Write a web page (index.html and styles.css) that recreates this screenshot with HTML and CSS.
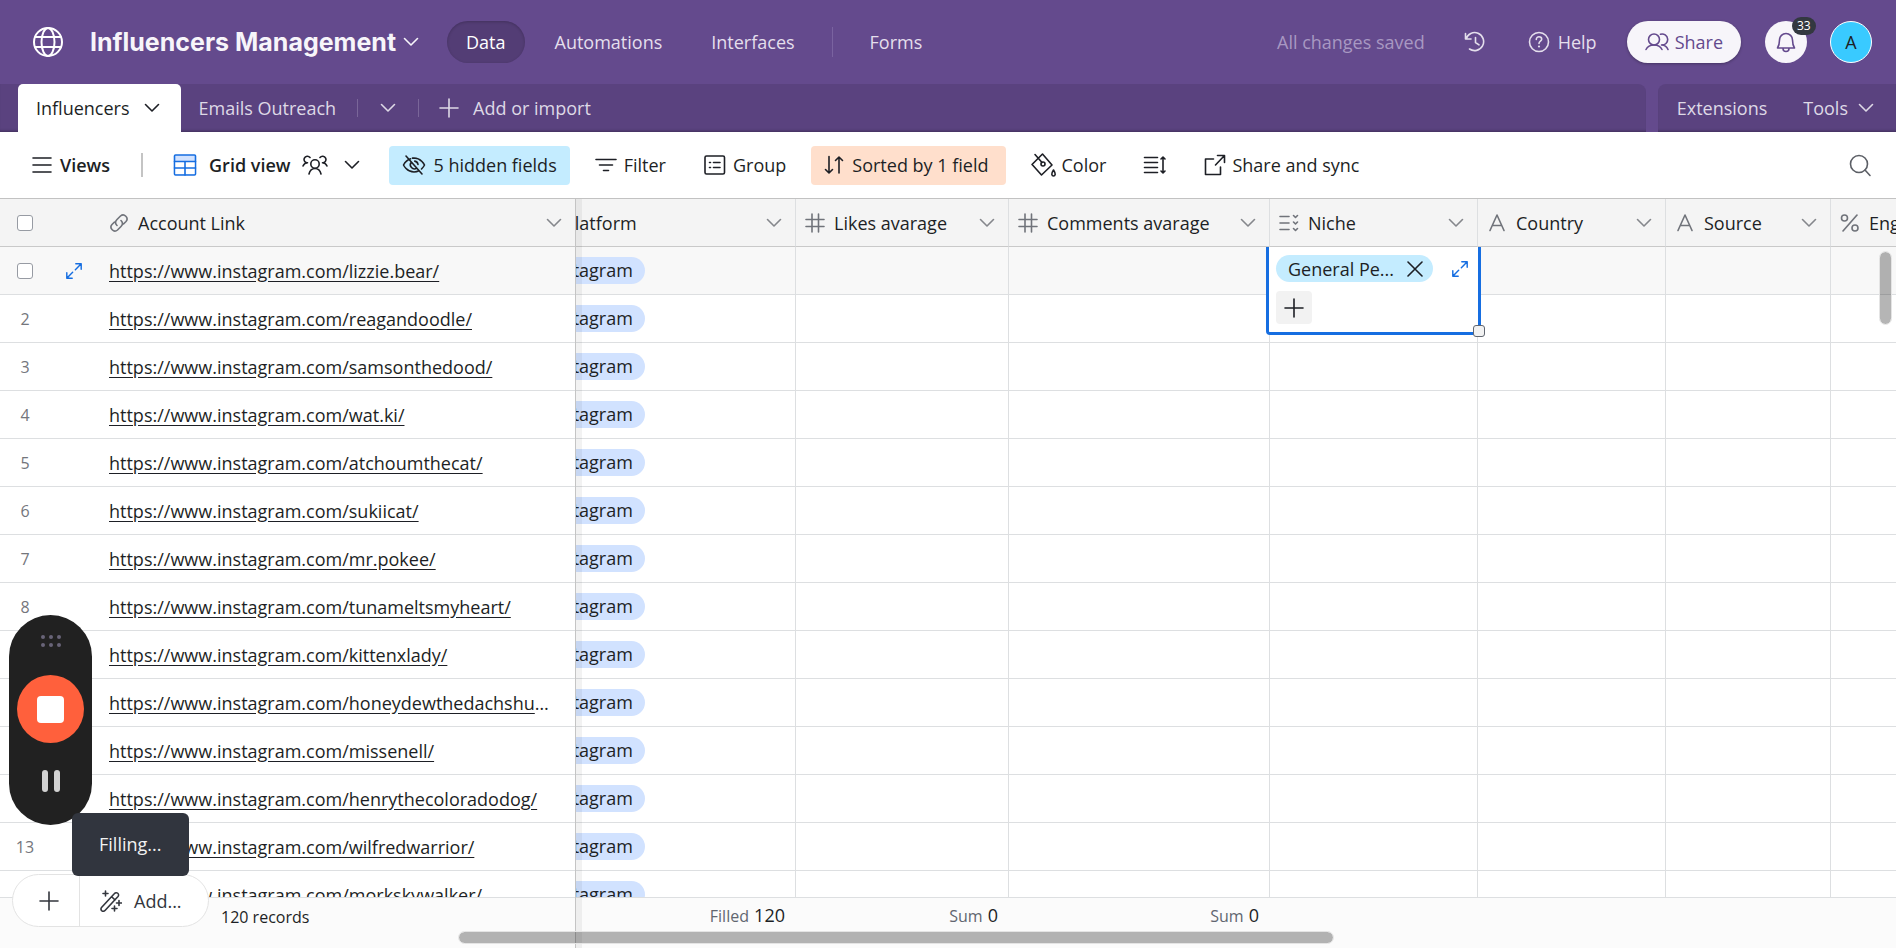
FILE: index.html
```html
<!DOCTYPE html>
<html lang="en">
<head>
<meta charset="utf-8">
<title>Influencers Management</title>
<link rel="stylesheet" href="styles.css">
</head>
<body>
<svg class="defs" aria-hidden="true">
  <symbol id="i-chev" viewBox="0 0 16 10"><path d="M1.500 1.500 8 8l6.500-6.500"/></symbol>
  <symbol id="i-plus" viewBox="0 0 20 20"><path d="M10 1v18M1 10h18"/></symbol>
  <symbol id="i-hash" viewBox="0 0 20 20"><path d="M7 1v18M13.500 1v18M1 6.500h18M1 13.500h18"/></symbol>
  <symbol id="i-text" viewBox="0 0 20 20"><path d="M3 17.500 10 2l7 15.500M5.500 12.500h9"/></symbol>
  <symbol id="i-expand" viewBox="0 0 20 20"><path d="M12 2h6v6M18 2l-6.500 6.500M8 18H2v-6M2 18l6.500-6.500"/></symbol>
</svg>

<header class="topbar">
  <a class="home" href="#" aria-label="Home"><svg class="icon s32" viewBox="0 0 32 32"><circle cx="16" cy="16" r="14"/><ellipse cx="16" cy="16" rx="6.500" ry="14"/><path d="M3.500 11h25M3.500 21h25"/></svg></a>
  <button class="base-name"><span>Influencers Management</span><svg class="icon chev"><use href="#i-chev"/></svg></button>
  <nav class="modes">
    <a class="mode on" href="#">Data</a>
    <a class="mode" href="#">Automations</a>
    <a class="mode" href="#">Interfaces</a>
    <span class="mode-split"></span>
    <a class="mode" href="#">Forms</a>
  </nav>
  <div class="account">
    <span class="saved">All changes saved</span>
    <button class="history" aria-label="History"><svg class="icon s22" viewBox="0 0 22 22"><path d="M1.500 2.500v5.500H7M2 8A9 9 0 1 1 5.500 18M11.500 6.500v5l3.500 2.300"/></svg></button>
    <button class="help"><svg class="icon s22" viewBox="0 0 22 22"><circle cx="11" cy="11" r="9.500"/><path d="M8.300 8.500c0-1.600 1.200-2.700 2.700-2.700s2.700 1 2.700 2.500c0 1.900-2.700 2-2.700 4.200"/><circle class="dot" cx="11" cy="15.500" r="1.100"/></svg>Help</button>
    <button class="share"><svg class="icon s24" viewBox="0 0 24 24"><circle cx="9" cy="9.500" r="5.500"/><path d="M1 19.500C2.500 16.500 5.500 15 9 15s6.500 1.500 8 4.500M15.500 4.300A5.500 5.500 0 1 1 16.500 15c3 0 5.300 1.700 6.500 4.500"/></svg>Share</button>
    <button class="bell" aria-label="Notifications"><svg class="icon s24" viewBox="0 0 24 24"><path d="M5.500 10a6.500 6.500 0 0 1 13 0c0 4 1 6.300 2 8h-17c1-1.700 2-4 2-8zM9 18.500c0 4 6 4 6 0"/></svg><span class="badge">33</span></button>
    <button class="avatar">A</button>
  </div>
</header>

<div class="tabbar">
  <div class="tables">
    <button class="tab on">Influencers<svg class="icon chev"><use href="#i-chev"/></svg></button>
    <button class="tab">Emails Outreach</button>
    <span class="tab-split"></span>
    <button class="tab-more" aria-label="All tables"><svg class="icon chev"><use href="#i-chev"/></svg></button>
    <span class="tab-split"></span>
    <button class="tab-add"><svg class="icon s20"><use href="#i-plus"/></svg>Add or import</button>
  </div>
  <div class="tools">
    <button>Extensions</button>
    <button class="tools-menu">Tools<svg class="icon chev"><use href="#i-chev"/></svg></button>
  </div>
</div>

<div class="toolbar">
  <button class="tool views"><svg class="icon s20" viewBox="0 0 20 20"><path d="M1 3h18M1 10h18M1 17h18"/></svg>Views</button>
  <span class="tool-split"></span>
  <button class="tool view-name"><svg class="icon s24 blue" viewBox="0 0 24 24"><rect class="tint" x="1.500" y="2" width="21" height="20" rx="1"/><path class="sheet" d="M2.500 9h19v12h-19z"/><path d="M1.500 8.500h21M1.500 15h21M12 8.500V22"/></svg>Grid view<svg class="icon people" viewBox="0 0 26 22"><circle cx="13" cy="10" r="4.200"/><path d="M7 20c.8-3.500 3-5.500 6-5.500s5.200 2 6 5.500M1 12c.8-1.800 2.200-3 4.500-3.200M8 3.500A3.300 3.300 0 1 0 5.500 8.800M25 12c-.8-1.800-2.200-3-4.500-3.200M18 3.500a3.300 3.300 0 1 1 2.500 5.300"/></svg><svg class="icon chev"><use href="#i-chev"/></svg></button>
  <button class="tool hidden-fields"><svg class="icon s24" viewBox="0 0 24 24"><path d="M4 3l16 18M8.500 5.700C4 7.200 1.500 12 1.500 12s3.300 7 10.500 7c2 0 3.600-.5 5-1.200M10.500 5.100 12 5c7.200 0 10.500 7 10.500 7s-1 2-3 4M9.300 9.300a4 4 0 0 0 5.400 5.800M12.800 8.100A4 4 0 0 1 16 11.500"/></svg>5 hidden fields</button>
  <button class="tool"><svg class="icon s24" viewBox="0 0 24 24"><path d="M2 6.500h20M5.500 12h13M9.500 17.500h5"/></svg>Filter</button>
  <button class="tool"><svg class="icon s24" viewBox="0 0 24 24"><rect x="2" y="3" width="19.500" height="18" rx="1.500"/><path d="M6.500 9.500h1M10.500 9.500H17M6.500 14.500h1M10.500 14.500H17"/></svg>Group</button>
  <button class="tool sorted"><svg class="icon s20" viewBox="0 0 20 20"><path d="M5 1.500v16M1.500 14.500 5 18l3.500-3.500M15 18V2M11.500 5.500 15 2l3.500 3.500"/></svg>Sorted by 1 field</button>
  <button class="tool"><svg class="icon s26" viewBox="0 0 26 26"><path d="M12.500 2 2 12.500l1 1L11.500 23 22 13zM5 2.500l7 8"/><circle cx="13" cy="12" r="2"/><path d="M23.500 18c2.800 4.300 1.500 6 0 6s-2.800-1.700 0-6z"/></svg>Color</button>
  <button class="tool" aria-label="Row height"><svg class="icon s24" viewBox="0 0 24 24"><path d="M1.500 4.500h13M1.500 9.500h13M1.500 14.500h13M1.500 19.500h13M20 4.500v15M18 6l2-2 2 2M18 18l2 2 2-2"/></svg></button>
  <button class="tool"><svg class="icon s22" viewBox="0 0 22 22"><path d="M9.500 5H1.500v15.500h15v-7.500M13.500 1.500h7v7M20 2l-8.500 9"/></svg>Share and sync</button>
  <button class="search" aria-label="Search"><svg class="icon s24" viewBox="0 0 24 24"><circle cx="11" cy="11" r="8.500"/><path d="M17 17l5 5.500"/></svg></button>
</div>

<main class="grid">
  <section class="frozen">
    <div class="rows">
      <table>
        <thead><tr>
          <th class="num"><input type="checkbox" aria-label="Select all"></th>
          <th class="exp"></th>
          <th><div class="head"><svg class="icon s20" viewBox="0 0 20 20"><path d="M8 12.500c-2-2-2-4 0-6l3.500-3.500a3.900 3.900 0 0 1 5.500 5.500L14.500 11M12 7.500c2 2 2 4 0 6L8.500 17A3.900 3.900 0 0 1 3 11.500L5.500 9"/></svg>Account Link<svg class="icon chev"><use href="#i-chev"/></svg></div></th>
        </tr></thead>
        <tbody id="links"></tbody>
      </table>
    </div>
    <footer class="summary"><span class="count">120 records</span></footer>
  </section>

  <section class="scrolled">
    <div class="rows">
      <table class="fields">
        <colgroup><col class="c-platform"><col class="c-likes"><col class="c-comments"><col class="c-niche"><col class="c-country"><col class="c-source"><col class="c-eng"></colgroup>
        <thead><tr>
          <th><div class="head"><svg class="icon s20" viewBox="0 0 20 20"><circle cx="10" cy="10" r="8"/><path d="M6 8.500l4 4 4-4"/></svg>Platform<svg class="icon chev"><use href="#i-chev"/></svg></div></th>
          <th><div class="head"><svg class="icon s20"><use href="#i-hash"/></svg>Likes avarage<svg class="icon chev"><use href="#i-chev"/></svg></div></th>
          <th><div class="head"><svg class="icon s20"><use href="#i-hash"/></svg>Comments avarage<svg class="icon chev"><use href="#i-chev"/></svg></div></th>
          <th><div class="head"><svg class="icon s20" viewBox="0 0 20 20"><path d="M1 3.500h9M1 10h9M1 16.500h9M14.500 2.500l2 2 2-2M14.500 9l2 2 2-2M14.500 15.500l2 2 2-2"/></svg>Niche<svg class="icon chev"><use href="#i-chev"/></svg></div></th>
          <th><div class="head"><svg class="icon s20"><use href="#i-text"/></svg>Country<svg class="icon chev"><use href="#i-chev"/></svg></div></th>
          <th><div class="head"><svg class="icon s20"><use href="#i-text"/></svg>Source<svg class="icon chev"><use href="#i-chev"/></svg></div></th>
          <th><div class="head"><svg class="icon s20" viewBox="0 0 20 20"><circle cx="4.500" cy="5" r="3"/><circle cx="15" cy="15" r="3"/><path d="M17 2 3 18"/></svg>Engagement</div></th>
        </tr></thead>
        <tbody id="values"></tbody>
      </table>
    </div>
    <footer class="summary sums">
      <span class="sum c-platform">Filled <b>120</b></span>
      <span class="sum c-likes">Sum <b>0</b></span>
      <span class="sum c-comments">Sum <b>0</b></span>
    </footer>
  </section>
  <div class="vbar"></div>
  <div class="hbar"></div>
</main>

<div class="add-record">
  <button aria-label="Add record"><svg class="icon s20"><use href="#i-plus"/></svg></button>
  <button class="add-menu"><svg class="icon s22" viewBox="0 0 22 22"><path d="M1.500 17.500 14.500 3.500a2 2 0 0 1 3.500 3L5 20.500a2.200 2.200 0 0 1-3.500-3zM11.500 6.500l3.500 3.500M5.500 1v5M3 3.500h5M19 10.500v5M16.500 13h5M14.500 16v5M12 18.500h5"/></svg>Add...</button>
</div>

<aside class="recorder">
  <svg class="grip" viewBox="0 0 20 12"><circle cx="2" cy="2" r="2"/><circle cx="10" cy="2" r="2"/><circle cx="18" cy="2" r="2"/><circle cx="2" cy="10" r="2"/><circle cx="10" cy="10" r="2"/><circle cx="18" cy="10" r="2"/></svg>
  <button class="stop" aria-label="Stop"></button>
  <button class="pause" aria-label="Pause"></button>
</aside>
<div class="toast" role="status">Filling...</div>
<script src="grid.js"></script>
</body>
</html>
```
FILE: styles.css
```css
* { box-sizing: border-box; }
body {
  margin: 0;
  height: 100vh;
  display: flex;
  flex-direction: column;
  overflow: hidden;
  font: 18px/24px "Open Sans", "Noto Sans", sans-serif;
  color: #1d1f25;
  background: #fff;
}
button {
  display: flex;
  align-items: center;
  padding: 0;
  border: 0;
  background: none;
  color: inherit;
  font: inherit;
  white-space: nowrap;
}
a { color: inherit; text-decoration: none; }
.defs { display: none; }
.icon { flex: none; fill: none; stroke: currentColor; stroke-width: 1.6; stroke-linecap: round; stroke-linejoin: round; }
.chev { width: 16px; height: 10px; }
.s20 { width: 20px; height: 20px; }
.s22 { width: 22px; height: 22px; }
.s24 { width: 24px; height: 24px; }
.s26 { width: 26px; height: 26px; }
.s32 { width: 32px; height: 32px; }
.people { width: 26px; height: 22px; }
.dot { fill: currentColor; stroke: none; }

.topbar {
  flex: none;
  height: 84px;
  display: flex;
  align-items: center;
  padding: 0 24px 0 32px;
  background: #644a8d;
  color: #e4dfec;
}
.home { display: flex; color: #fff; }
.home .icon { stroke-width: 2; }
.base-name { margin-left: 26px; gap: 7px; font: 700 25px/32px Inter, sans-serif; color: #f7f5fa; }
.modes { display: flex; align-items: center; margin-left: 28px; }
.mode { height: 42px; padding: 9px 19px; margin-right: 11px; border-radius: 21px; }
.mode.on { background: #533d75; color: #fff; box-shadow: inset 0 1px 3px rgba(0, 0, 0, .2); }
.mode-split { width: 1px; height: 30px; margin: 0 18px 0 7px; background: #7a63a0; }
.account { display: flex; align-items: center; margin-left: auto; }
.saved { color: #a898c2; white-space: nowrap; }
.history { margin-left: 39px; }
.help { margin-left: 42px; gap: 8px; }
.share { height: 42px; margin-left: 30px; padding: 0 18px; gap: 6px; border-radius: 21px; background: #f7f5fa; color: #644a8d; box-shadow: 0 1px 3px rgba(0, 0, 0, .3); }
.bell { position: relative; width: 42px; height: 42px; margin-left: 24px; justify-content: center; border-radius: 50%; background: #f7f5fa; color: #644a8d; }
.badge { position: absolute; top: -4px; left: 27px; height: 18px; padding: 0 5px; border-radius: 9px; background: #333840; color: #fff; font-size: 12px; line-height: 18px; }
.avatar { width: 42px; height: 42px; margin-left: 23px; justify-content: center; border: 1px solid #fff; border-radius: 50%; background: #39caff; color: #1d1f25; }

.tabbar { flex: none; display: flex; gap: 12px; height: 48px; background: #644a8d; color: #ded9e6; }
.tables, .tools { display: flex; align-items: stretch; background: #5a427f; box-shadow: inset 0 -3px 3px -2px rgba(0, 0, 0, .3); }
.tables { flex: 1; padding-left: 18px; border-radius: 0 8px 0 0; }
.tools { padding: 0 22px 0 19px; gap: 36px; border-radius: 8px 0 0 0; }
.tools-menu { gap: 10px; }
.tab { padding: 0 21px 0 18px; gap: 14px; }
.tab.on { border-radius: 5px 5px 0 0; background: #fff; color: #1d1f25; }
.tab-split { width: 1px; height: 18px; align-self: center; background: #7a6699; }
.tab-more { width: 60px; justify-content: center; }
.tab-add { padding-left: 20px; gap: 14px; }

.toolbar { flex: none; display: flex; align-items: center; height: 67px; padding: 0 24px 0 20px; border-bottom: 1px solid #c2c2c2; }
.tool { height: 39px; padding: 0 13px 0 12px; margin-right: 12px; gap: 6px; border-radius: 4px; }
.views, .view-name { font-weight: 600; gap: 8px; }
.tool-split { width: 2px; height: 24px; margin: 0 18px 0 6px; background: #c4c4c4; }
.view-name { gap: 12px; margin-right: 16px; }
.view-name .chev { margin-left: 4px; }
.blue { color: #166ee1; }
.tint { fill: #d1e2ff; }
.sheet { fill: #fff; stroke: none; }
.hidden-fields { padding: 0 13px; gap: 7px; background: #c4ecff; }
.sorted { padding: 0 17px 0 13px; gap: 8px; margin-right: 12px; background: #ffdfcc; }
.search { margin-left: auto; color: #5c5f66; }

.grid { position: relative; flex: 1; min-height: 0; display: flex; }
.frozen, .scrolled { display: flex; flex-direction: column; min-width: 0; }
.frozen { flex: none; width: 576px; border-right: 1px solid #c4c4c4; }
.scrolled { position: relative; flex: 1; overflow: hidden; }
.scrolled::before { content: ""; position: absolute; z-index: 3; inset: 0 auto 0 0; width: 6px; background: rgba(0, 0, 0, .05); }
.rows { flex: 1; min-height: 0; overflow: hidden; }
table { width: 100%; table-layout: fixed; border-collapse: separate; border-spacing: 0; }
th, td { height: 48px; padding: 0; border-bottom: 1px solid #dddfe1; text-align: left; font-weight: 400; }
th { background: #f4f4f4; border-bottom-color: #c9c9c9; }
tbody tr:first-child td { background: #f8f8f8; }
.num { width: 50px; text-align: center; color: #74767c; font-size: 16px; }
.exp { width: 59px; }
.exp .icon { display: block; width: 18px; height: 18px; margin-left: 15px; color: #166ee1; }
.head { display: flex; align-items: center; gap: 9px; padding-right: 13px; white-space: nowrap; }
.head .icon { color: #70737a; }
.head .chev { margin-left: auto; color: #85878c; }
input[type="checkbox"] { appearance: none; display: block; width: 16px; height: 16px; margin: 0 0 0 17px; border: 1px solid #979ba3; border-radius: 3px; background: #fff; }
.link { display: block; margin-right: 22px; overflow: hidden; text-overflow: ellipsis; white-space: nowrap; text-decoration: underline; text-underline-offset: 3px; }

.fields { width: calc(100% + 50px); margin-left: -50px; }
.fields th, .fields td { border-right: 1px solid #dddfe1; }
.fields th:last-child, .fields td:last-child { border-right: 0; overflow: hidden; }
.fields .head { padding-left: 9px; }
.c-platform { width: 270px; }
.c-likes { width: 213px; }
.c-comments { width: 261px; }
.c-niche { width: 208px; }
.c-country { width: 188px; }
.c-source { width: 165px; }
.pill { display: inline-block; height: 27px; margin-left: 9px; padding: 0 12px 0 13px; border-radius: 14px; background: #d1e2ff; line-height: 26px; vertical-align: middle; }
.cell { position: relative; }
.editor { position: absolute; z-index: 2; top: 0; left: -4px; right: -4px; height: 88px; padding: 8px 6px 0 7px; border: 3px solid #166ee1; border-top: 0; border-radius: 0 0 4px 4px; background: #fff; }
.line { display: flex; align-items: center; justify-content: space-between; padding-right: 3px; }
.chosen { display: flex; align-items: center; gap: 13px; height: 27px; padding: 0 10px 0 12px; border-radius: 14px; background: #c4ecff; }
.line > .icon { width: 18px; height: 18px; color: #166ee1; }
.plus { width: 36px; height: 33px; margin-top: 9px; justify-content: center; border-radius: 4px; background: #f2f2f2; }
.fill { position: absolute; right: -7px; bottom: -5px; width: 12px; height: 12px; border: 1px solid #616670; border-radius: 3px; background: #f2f2f2; }

.summary { flex: none; height: 51px; border-top: 1px solid #dddfe1; background: #fbfbfb; font-size: 16px; }
.count { display: block; padding: 7px 0 0 221px; }
.sums { display: flex; padding-top: 5px; margin-left: -50px; }
.sum { flex: none; padding-right: 11px; text-align: right; color: #616670; }
.sum b { margin-left: 1px; font-size: 18px; font-weight: 400; color: #1d1f25; }
.vbar, .hbar { position: absolute; z-index: 4; border: 1px solid #e4e4e4; border-radius: 7px; background: rgba(0, 0, 0, .29); background-clip: padding-box; }
.vbar { top: 52px; right: 4px; width: 13px; height: 74px; }
.hbar { left: 458px; right: 562px; bottom: 4px; height: 13px; }

.add-record { position: fixed; z-index: 5; left: 12px; bottom: 21px; display: flex; height: 53px; border: 1px solid #e3e3e3; border-radius: 27px; background: #fff; color: #33363d; }
.add-record button { padding: 0 20px 0 26px; }
.add-record .add-menu { padding: 0 26px 0 20px; gap: 12px; border-left: 1px solid #e3e3e3; }
.recorder { position: fixed; z-index: 6; left: 9px; bottom: 123px; display: flex; flex-direction: column; align-items: center; width: 83px; height: 210px; padding-top: 20px; border-radius: 42px; background: #212121; }
.grip { width: 20px; height: 12px; fill: #686478; }
.stop { width: 67px; height: 68px; margin-top: 28px; justify-content: center; border-radius: 50%; background: #ff603c; }
.stop::before { content: ""; width: 27px; height: 27px; border-radius: 4px; background: #fff; }
.pause { width: 18px; height: 22px; margin-top: 27px; justify-content: space-between; }
.pause::before, .pause::after { content: ""; width: 6px; height: 22px; border-radius: 3px; background: #d2d2d2; }
.toast { position: fixed; z-index: 7; left: 72px; bottom: 72px; padding: 19px 28px 20px 27px; border-radius: 6px; background: #31353e; color: #f2f2f2; }
```
FILE: grid.js
```js
const names = ["lizzie.bear", "reagandoodle", "samsonthedood", "wat.ki", "atchoumthecat", "sukiicat", "mr.pokee",
  "tunameltsmyheart", "kittenxlady", "honeydewthedachshund", "missenell", "henrythecoloradodog", "wilfredwarrior", "morkskywalker"];

const expand = '<svg class="icon"><use href="#i-expand"/></svg>';

const editor = `<div class="editor">
  <div class="line"><span class="chosen">General Pe...<svg class="icon" width="16" height="16" viewBox="0 0 16 16"><path d="M1 1l14 14M15 1 1 15"/></svg></span>${expand}</div>
  <button class="plus" aria-label="Add option"><svg class="icon s20"><use href="#i-plus"/></svg></button>
  <span class="fill"></span>
</div>`;

document.getElementById("links").innerHTML = names.map((name, i) => `<tr>
  <td class="num">${i ? i + 1 : '<input type="checkbox" aria-label="Select record 1">'}</td>
  <td class="exp">${i ? "" : expand}</td>
  <td><a class="link" href="#">https://www.instagram.com/${name}/</a></td>
</tr>`).join("");

document.getElementById("values").innerHTML = names.map((name, i) => `<tr>
  <td><span class="pill">Instagram</span></td><td></td><td></td>
  <td class="cell">${i ? "" : editor}</td><td></td><td></td><td></td>
</tr>`).join("");
```
